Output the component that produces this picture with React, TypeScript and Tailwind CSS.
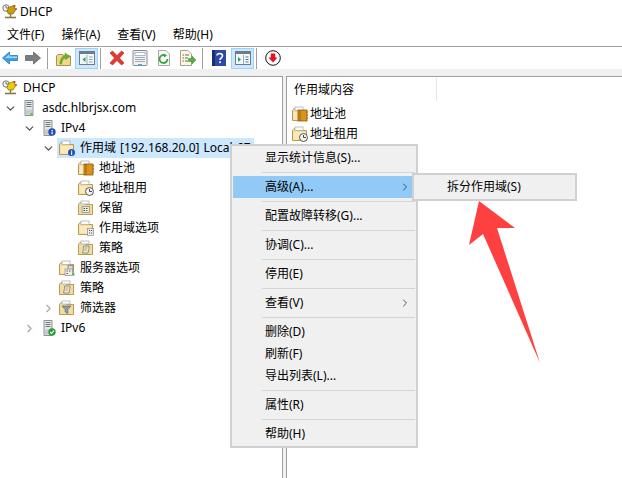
import type { ReactNode } from "react";
import { ChevronDown, ChevronRight } from "lucide-react";

// Small MMC-style icons, all drawn on a 16x16 box
function Svg({ children, className = "" }: { children: ReactNode; className?: string }) {
  return (
    <svg viewBox="0 0 16 16" className={`w-4 h-4 shrink-0 overflow-visible ${className}`}>
      {children}
    </svg>
  );
}

function FolderBase() {
  return (
    <>
      <path d="M0.5 4.5V14.5H14.5V4.5H7.5L7 2.5H2L0.5 4.5Z" fill="#f8dc92" stroke="#b8995a" strokeWidth="1" />
      <rect x="3" y="1" width="8" height="3.5" fill="#fff" stroke="#b0b0b0" strokeWidth="0.8" />
      <path d="M1.5 6H13.5V13.5H1.5Z" fill="#fbe9b8" />
    </>
  );
}

function ScopeIcon() {
  return (
    <Svg>
      <FolderBase />
      <circle cx="12.5" cy="12.5" r="3.5" fill="#1f4fb5" />
      <rect x="12" y="10.5" width="1.2" height="1.2" fill="#fff" />
      <rect x="12" y="12.2" width="1.2" height="2.6" fill="#fff" />
    </Svg>
  );
}

function PoolIcon() {
  return (
    <Svg>
      <FolderBase />
      <rect x="6" y="4" width="9" height="11" fill="#d9921a" stroke="#8c5a10" strokeWidth="0.8" />
      <path d="M8 4V15" stroke="#8c5a10" strokeWidth="0.8" />
      <path d="M15 6H16M15 9H16M15 12H16" stroke="#c03020" strokeWidth="1" />
    </Svg>
  );
}

function LeaseIcon() {
  return (
    <Svg>
      <FolderBase />
      <circle cx="11.5" cy="11.5" r="4" fill="#f4f4f4" stroke="#555" strokeWidth="1" />
      <path d="M11.5 9V11.5H14" fill="none" stroke="#333" strokeWidth="0.9" />
    </Svg>
  );
}

function ReserveIcon() {
  return (
    <Svg>
      <path d="M0.5 4.5V14.5H14.5V4.5H7.5L7 2.5H2L0.5 4.5Z" fill="#f3dca0" stroke="#b8995a" />
      <rect x="3" y="1" width="8" height="3" fill="#fff" stroke="#b0b0b0" strokeWidth="0.8" />
      <rect x="4" y="6.5" width="7.5" height="6" fill="#e8e8e0" stroke="#888" strokeWidth="0.7" />
      <path d="M5.5 8.5H7M8 8.5H9.5M5.5 10.5H7" stroke="#555" strokeWidth="1" />
      <path d="M8 10.5H9.5" stroke="#2aa52a" strokeWidth="1" />
    </Svg>
  );
}

function OptionIcon() {
  return (
    <Svg>
      <FolderBase />
      <rect x="9.5" y="8.5" width="6" height="7" fill="#eeeeee" stroke="#8a8a8a" strokeWidth="0.7" />
      <path d="M11 10.5H12.2M13 10.5H14.2M11 13H12.2M13 13H14.2" stroke="#555" strokeWidth="1" />
    </Svg>
  );
}

function ServerOptionIcon() {
  return (
    <Svg>
      <FolderBase />
      <rect x="9" y="5.5" width="5" height="5" fill="#d8d8d8" stroke="#777" strokeWidth="0.7" />
      <rect x="6" y="9" width="7.5" height="6.5" fill="#eeeeee" stroke="#8a8a8a" strokeWidth="0.7" />
      <path d="M7.5 11H9M10 11H11.5M7.5 13.5H9" stroke="#555" strokeWidth="1" />
      <rect x="13.5" y="13.5" width="2" height="2" fill="#36c030" />
    </Svg>
  );
}

function PolicyIcon() {
  return (
    <Svg>
      <path d="M0.5 4.5V14.5H14.5V4.5H7.5L7 2.5H2L0.5 4.5Z" fill="#f3dca0" stroke="#b8995a" />
      <rect x="3" y="1" width="8" height="3" fill="#fff" stroke="#b0b0b0" strokeWidth="0.8" />
      <path d="M5.5 6H11V8.5L10 13H4.5L5.5 8.5Z" fill="#efe6cf" stroke="#7f7f6f" strokeWidth="0.8" />
      <path d="M6.8 8H9.3M6.3 10H8.8" stroke="#8a8a7a" strokeWidth="0.7" />
    </Svg>
  );
}

function FilterIcon() {
  return (
    <Svg>
      <path d="M0.5 4.5V14.5H14.5V4.5H7.5L7 2.5H2L0.5 4.5Z" fill="#f3dca0" stroke="#b8995a" />
      <rect x="3" y="1" width="8" height="3" fill="#fff" stroke="#b0b0b0" strokeWidth="0.8" />
      <path d="M3 6H12L8.8 9.5V13.5L6.2 12V9.5Z" fill="#8fa0b0" stroke="#5a6670" strokeWidth="0.7" />
    </Svg>
  );
}

function DhcpIcon({ small = false }: { small?: boolean }) {
  return (
    <Svg>
      <circle cx="4" cy="4" r="3.2" fill="#f4f4f4" stroke="#666" strokeWidth="0.9" />
      <path d="M4 2V4H6" fill="none" stroke="#444" strokeWidth="0.7" />
      <path d="M6.5 3.5L12 1.5L13.5 6L11 10H6.5L5 7.5Z" fill={small ? "#c8a000" : "#e8d000"} stroke="#77660a" strokeWidth="0.7" />
      <circle cx="12.5" cy="2" r="1.1" fill="#d83a2c" />
      <circle cx="14" cy="5" r="1" fill="#d83a2c" />
      <path d="M8.5 10V13" stroke="#777" strokeWidth="1.4" />
      <path d="M3 13.5H14" stroke="#8a7a40" strokeWidth="1.6" />
    </Svg>
  );
}

function ServerIcon({ badge }: { badge?: "info" | "ok" }) {
  return (
    <Svg>
      <g transform="translate(1.5 0)">
        <path d="M2.5 0.5H10.5V15.5H2.5Z" fill="#e6e8ea" stroke="#8d9196" strokeWidth="1" />
        <path d="M4 2.5H9M4 4.5H9M4 6.5H9" stroke="#70757b" strokeWidth="1" />
        <path d="M3.5 9.5H9.5V14.5H3.5Z" fill="#c6cacd" />
        {!badge && <rect x="8" y="13" width="2" height="2" fill="#5ecb3e" />}
        {badge === "info" && (
          <>
            <circle cx="10.5" cy="12" r="3.7" fill="#1f4fb5" />
            <rect x="10" y="9.8" width="1.2" height="1.2" fill="#fff" />
            <rect x="10" y="11.5" width="1.2" height="2.8" fill="#fff" />
          </>
        )}
        {badge === "ok" && (
          <>
            <circle cx="10.5" cy="12" r="3.7" fill="#2a9d33" />
            <path d="M8.6 12L10 13.5L12.4 10.6" fill="none" stroke="#fff" strokeWidth="1.1" />
          </>
        )}
      </g>
    </Svg>
  );
}

function ToolbarIcons() {
  const sep = <div className="w-px h-[21px] bg-[#a0a0a0]" />;
  return (
    <div className="h-[22px] flex items-center bg-white pl-[2px]">
      <svg viewBox="0 0 16 14" className="w-4 h-[14px]">
        <path d="M0.5 7L7.5 1V4.5H15.5V9.5H7.5V13Z" fill="#3aa0ea" stroke="#2a78c0" strokeWidth="0.8" />
        <path d="M3 7L7.5 3.2V5.5H15V7Z" fill="#a4dcfa" />
      </svg>
      <svg viewBox="0 0 16 14" className="w-4 h-[14px] ml-[7px]">
        <path d="M15.5 7L8.5 1V4.5H0.5V9.5H8.5V13Z" fill="#7d7d7d" stroke="#666" strokeWidth="0.8" />
      </svg>
      <div className="ml-[6px]">{sep}</div>
      <svg viewBox="0 0 16 16" className="w-4 h-4 ml-[8px]">
        <path d="M0.5 6V15.5H14.5V6H8L7 4.5H2Z" fill="#f2d68a" stroke="#b08f4a" />
        <path d="M4 14C4 9 6 6.5 9 5.5V3L14 6.5L9.5 9.5V7.5C7 8.5 6 10.5 5.5 14Z" fill="#6fb52c" stroke="#4d8a1a" strokeWidth="0.5" />
      </svg>
      <div className="ml-[3px] w-[23px] h-[21px] bg-[#cce8ff] border border-[#99d1ff] flex items-center justify-center">
        <svg viewBox="0 0 16 16" className="w-4 h-4">
          <rect x="0.5" y="1.5" width="15" height="13" fill="#f4f8fb" stroke="#6e7b88" />
          <rect x="1" y="2" width="14" height="2" fill="#6e7b88" />
          <path d="M8 5V14" stroke="#a0aab4" />
          <path d="M6.5 7L3.5 9.5L6.5 12Z" fill="#2aa052" />
          <path d="M10 7H13.5M10 9.5H13.5M10 12H13.5" stroke="#8fa0b0" />
        </svg>
      </div>
      <div className="ml-[2px]">{sep}</div>
      <svg viewBox="0 0 16 16" className="w-4 h-4 ml-[8px]">
        <path d="M1 3L3.5 1L8 5.5L12.5 1L15 3L10.5 8L15 13L12.5 15L8 10.5L3.5 15L1 13L5.5 8Z" fill="#e23a32" stroke="#b02420" strokeWidth="0.6" />
      </svg>
      <svg viewBox="0 0 16 16" className="w-4 h-4 ml-[7px]">
        <rect x="1" y="0.5" width="14" height="15" rx="1" fill="#f2f2f2" stroke="#858a8f" />
        <rect x="3" y="2.5" width="10" height="3" fill="#fff" stroke="#8fa0b0" strokeWidth="0.7" />
        <path d="M3 7.5H13M3 9.5H13M3 11.5H13" stroke="#8b98a4" strokeWidth="0.8" />
        <rect x="6" y="14" width="4" height="1.5" fill="#4aa8e0" />
      </svg>
      <svg viewBox="0 0 16 16" className="w-4 h-4 ml-[8px]">
        <path d="M2.5 0.5H10L13.5 4V15.5H2.5Z" fill="#f8f8f8" stroke="#a8a8a8" />
        <path d="M11.5 9A4 4 0 1 1 9 5.3" fill="none" stroke="#36a83a" strokeWidth="1.8" />
        <path d="M8 3.5L11 5.5L8 7.5Z" fill="#36a83a" />
      </svg>
      <svg viewBox="0 0 16 16" className="w-4 h-4 ml-[8px]">
        <path d="M0.5 0.5H8L11.5 4V15.5H0.5Z" fill="#fbf6e4" stroke="#a8a290" />
        <path d="M2.5 5H4M5 5H9M2.5 8H4M5 8H8M2.5 11H4M5 11H8" stroke="#6f6a58" />
        <path d="M8.5 8.5H12V6L16 10L12 14V11.5H8.5Z" fill="#58b040" stroke="#3f8a2c" strokeWidth="0.5" />
      </svg>
      <div className="ml-[6px]">{sep}</div>
      <svg viewBox="0 0 14 16" className="w-[14px] h-4 ml-[9px]">
        <rect width="14" height="16" fill="#2f49a6" />
        <rect x="0" y="0" width="3" height="16" fill="#1c2e78" />
        <path d="M5 5.5C5 2.8 10.5 2.8 10.5 5.8C10.5 7.8 8 7.8 8 10" fill="none" stroke="#fff" strokeWidth="1.6" />
        <rect x="7.2" y="11.3" width="1.7" height="1.8" fill="#fff" />
      </svg>
      <div className="ml-[5px] w-[23px] h-[21px] bg-[#cce8ff] border border-[#99d1ff] flex items-center justify-center">
        <svg viewBox="0 0 16 16" className="w-4 h-4">
          <rect x="0.5" y="1.5" width="15" height="13" fill="#f4f8fb" stroke="#6e7b88" />
          <rect x="1" y="2" width="14" height="2" fill="#6e7b88" />
          <path d="M8.5 5V14" stroke="#a0aab4" />
          <path d="M3 7L6 9.5L3 12Z" fill="#2aa052" />
          <path d="M10.5 7H13.5M10.5 9.5H13.5M10.5 12H13.5" stroke="#4a7aa8" />
        </svg>
      </div>
      <div className="ml-[2px]">{sep}</div>
      <svg viewBox="0 0 16 16" className="w-4 h-4 ml-[8px]">
        <circle cx="8" cy="8" r="7.3" fill="#fff" stroke="#111" strokeWidth="1" />
        <path d="M5.8 3.5H10.2V7.5H12.5L8 12.5L3.5 7.5H5.8Z" fill="#e8101c" />
      </svg>
    </div>
  );
}

type Row = { label: string; depth: number; icon: ReactNode; open?: boolean; closed?: boolean; selected?: boolean };

const rows: Row[] = [
  { label: "DHCP", depth: 0, icon: <DhcpIcon /> },
  { label: "asdc.hlbrjsx.com", depth: 1, icon: <ServerIcon />, open: true },
  { label: "IPv4", depth: 2, icon: <ServerIcon badge="info" />, open: true },
  { label: "作用域 [192.168.20.0] Local 67", depth: 3, icon: <ScopeIcon />, open: true, selected: true },
  { label: "地址池", depth: 4, icon: <PoolIcon /> },
  { label: "地址租用", depth: 4, icon: <LeaseIcon /> },
  { label: "保留", depth: 4, icon: <ReserveIcon /> },
  { label: "作用域选项", depth: 4, icon: <OptionIcon /> },
  { label: "策略", depth: 4, icon: <PolicyIcon /> },
  { label: "服务器选项", depth: 3, icon: <ServerOptionIcon /> },
  { label: "策略", depth: 3, icon: <PolicyIcon /> },
  { label: "筛选器", depth: 3, icon: <FilterIcon />, closed: true },
  { label: "IPv6", depth: 2, icon: <ServerIcon badge="ok" />, closed: true },
];

const indent = ["pl-[2px]", "pl-[2px]", "pl-[21px]", "pl-[40px]", "pl-[59px]"];

function TreeRow({ row }: { row: Row }) {
  return (
    <div className={`h-5 flex items-center whitespace-nowrap ${indent[row.depth]}`}>
      {row.depth > 0 && (
        <span className="w-[19px] flex justify-center pr-[2px]">
          {row.open && <ChevronDown size={13} strokeWidth={2.2} className="text-[#4d4d4d]" />}
          {row.closed && <ChevronRight size={13} strokeWidth={2} className="text-[#a6a6a6]" />}
        </span>
      )}
      {row.selected ? (
        <span className="h-5 w-[197px] -ml-[2px] pl-[2px] bg-[#cce8ff] flex items-center overflow-hidden [word-spacing:1px]">
          {row.icon}
          <span className="ml-[5px]">{row.label}</span>
        </span>
      ) : (
        <>
          {row.icon}
          <span className="ml-[5px]">{row.label}</span>
        </>
      )}
    </div>
  );
}

type MenuEntry = { label: string; arrow?: boolean; active?: boolean } | "sep";

const menu: MenuEntry[] = [
  { label: "显示统计信息(S)..." },
  "sep",
  { label: "高级(A)...", arrow: true, active: true },
  "sep",
  { label: "配置故障转移(G)..." },
  "sep",
  { label: "协调(C)..." },
  "sep",
  { label: "停用(E)" },
  "sep",
  { label: "查看(V)", arrow: true },
  "sep",
  { label: "删除(D)" },
  { label: "刷新(F)" },
  { label: "导出列表(L)..." },
  "sep",
  { label: "属性(R)" },
  "sep",
  { label: "帮助(H)" },
];

function ContextMenu() {
  return (
    <div className="absolute left-[230px] top-[144px] w-[188px] h-[304px] bg-[#f0f0f0] border-2 border-[#d0d0d0] py-px pl-px">
      {menu.map((item, i) =>
        item === "sep" ? (
          <div key={i} className="h-[7px] flex items-center pl-[29px] pr-px">
            <div className="h-px w-full bg-[#d4d4d4]" />
          </div>
        ) : (
          <div
            key={i}
            className={`relative h-[22px] flex items-center pl-[32px] whitespace-nowrap ${item.active ? "bg-[#91c9f7] -mr-px" : ""}`}
          >
            {item.label}
            {item.arrow && <ChevronRight size={12} strokeWidth={1.6} className="absolute left-[166px] text-[#333]" />}
          </div>
        ),
      )}
    </div>
  );
}

export default function App() {
  return (
    <div className="relative w-[622px] h-[478px] overflow-hidden bg-white text-[12px] leading-none text-black font-['Noto_Sans','Noto_Sans_CJK_SC',sans-serif]">
      {/* title bar */}
      <div className="h-[23px] flex items-center pl-[2px] gap-[2px]">
        <DhcpIcon small />
        <span className="text-[12px]">DHCP</span>
      </div>
      {/* menu bar */}
      <div className="h-[24px] pt-px flex items-center pl-[7px] gap-[17px] border-b border-[#a0a0a0]">
        <span>文件(F)</span>
        <span>操作(A)</span>
        <span>查看(V)</span>
        <span>帮助(H)</span>
      </div>
      <ToolbarIcons />
      <div className="h-[7px] bg-[#f0f0f0]" />
      {/* panes */}
      <div className="h-[402px] flex bg-[#f0f0f0]">
        <div className="w-[283px] bg-white border-t border-r border-[#a0a0a0] pt-px">
          {rows.map((row, i) => (
            <TreeRow key={i} row={row} />
          ))}
        </div>
        <div className="ml-[3px] flex-1 bg-white border-t border-l border-[#a0a0a0]">
          <div className="h-6 flex items-center">
            <div className="w-[150px] h-[23px] mt-px flex items-center pl-[7px] border-r border-[#e5e5e5]">作用域内容</div>
          </div>
          <div className="pl-[5px] pt-[3px]">
            <div className="h-5 flex items-center gap-[2px]">
              <PoolIcon />
              地址池
            </div>
            <div className="h-5 flex items-center gap-[2px]">
              <LeaseIcon />
              地址租用
            </div>
          </div>
        </div>
      </div>
      <ContextMenu />
      {/* submenu */}
      <div className="absolute left-[412px] top-[173px] w-[165px] h-[28px] bg-[#f0f0f0] border-2 border-[#d0d0d0] flex items-center pl-[33px] whitespace-nowrap">
        拆分作用域(S)
      </div>
      {/* red arrow annotation */}
      <svg viewBox="0 0 622 478" className="absolute inset-0 w-[622px] h-[478px] pointer-events-none">
        <path d="M479 201L515 228L497 228L540 363L483 234L469 245Z" fill="#ff4040" />
      </svg>
    </div>
  );
}
